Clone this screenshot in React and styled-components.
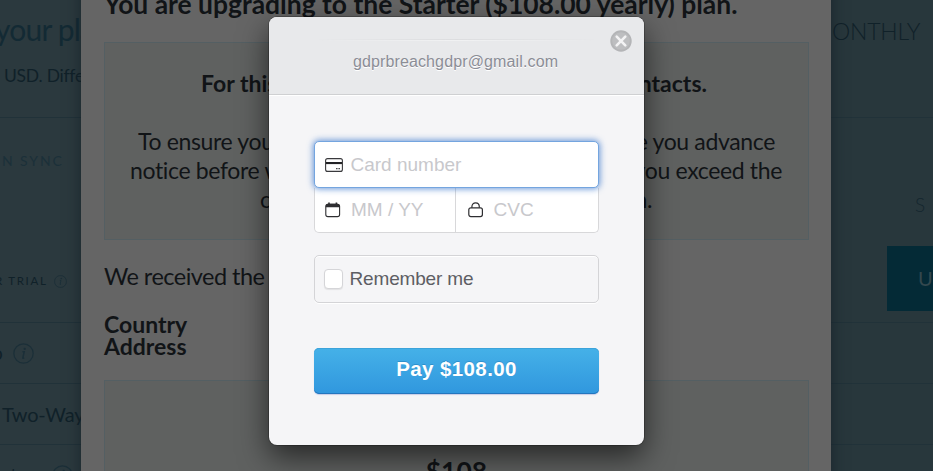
import React from "react";
import styled, { createGlobalStyle } from "styled-components";

const GlobalStyle = createGlobalStyle`
  * { box-sizing: border-box; }
  body { margin: 0; overflow: hidden; background: #2b393e; font-family: Lato, sans-serif; }
`;

const Screen = styled.main`
  position: relative;
  width: 933px;
  height: 471px;
  overflow: hidden;
`;

/* Pricing page, dimmed behind both dialogs */
const Pricing = styled.div`
  display: flex;
  justify-content: space-between;
  height: 100%;
  background: #2b393e;
`;

const Side = styled.section`
  width: ${(p) => p.$width}px;
  overflow: hidden;
  background: ${(p) => p.$bg};
  color: #15272f;
  white-space: nowrap;
`;

const Band = styled.div`
  height: ${(p) => p.$height}px;
  padding-top: ${(p) => p.$top || 0}px;
  border-bottom: 1px solid #213239;
`;

const Copy = styled.div`
  display: flex;
  align-items: center;
  gap: ${(p) => p.$gap || 0}px;
  height: ${(p) => p.$line}px;
  line-height: ${(p) => p.$line}px;
  margin: ${(p) => p.$margin || "0"};
  font-size: ${(p) => p.$size}px;
  font-weight: ${(p) => p.$weight || 400};
  letter-spacing: ${(p) => p.$track || 0}px;
  color: ${(p) => p.$color || "#102129"};
`;

const Upgrade = styled.div`
  width: 120px;
  height: 65px;
  margin: 27px 0 0 56px;
  padding-left: 31px;
  background: #042a36;
  color: #34484e;
  font-size: 20px;
  line-height: 65px;
`;

/* Plan confirmation sheet */
const Sheet = styled.section`
  position: absolute;
  top: 0;
  bottom: 0;
  left: 81px;
  width: 750px;
  padding: 0 22px 0 23px;
  overflow: hidden;
  background: #656565;
  color: #111417;
  white-space: nowrap;
`;

const SheetShade = styled.div`
  position: absolute;
  top: -20px;
  bottom: -20px;
  left: 81px;
  width: 750px;
  box-shadow: 0 0 14px rgba(18, 28, 36, 0.7);
`;

const SheetTitle = styled.h1`
  display: flex;
  height: 42px;
  margin: 0;
  font-size: 26.45px;
  font-weight: 700;
  line-height: 30px;
  & > span { display: block; margin-top: -11px; }
`;

const Panel = styled.div`
  height: ${(p) => p.$height}px;
  padding-top: ${(p) => p.$top}px;
  border: 1px solid #545f63;
  background: #5f6160;
`;

const SplitLine = styled.p`
  display: flex;
  justify-content: space-between;
  width: ${(p) => p.$width}px;
  margin: 0 0 ${(p) => p.$after || 0}px ${(p) => p.$left}px;
  font-size: 23px;
  font-weight: ${(p) => p.$weight || 400};
  letter-spacing: ${(p) => (p.$weight ? 0 : -0.35)}px;
  line-height: 29px;
`;

const Received = styled.p`
  margin: 21px 0 22px;
  font-size: 23.5px;
  letter-spacing: -0.52px;
  line-height: 30px;
`;

const Labels = styled.div`
  height: 67px;
  font-size: 23px;
  font-weight: 700;
  line-height: 22px;
`;

const Price = styled.div`
  font-size: 26.5px;
  font-weight: 700;
  line-height: 30px;
  text-align: center;
`;

/* Checkout dialog */
const Checkout = styled.section`
  position: absolute;
  top: 17px;
  left: 269px;
  width: 375px;
  height: 428px;
  border-radius: 8px;
  background: #f5f5f7;
  box-shadow: 0 12px 30px rgba(0, 0, 0, 0.6), 0 0 0 1px rgba(0, 0, 0, 0.22);
  font-family: "Liberation Sans", Arial, sans-serif;
`;

const CheckoutHeader = styled.header`
  height: 78px;
  padding-top: 22px;
  border-bottom: 1px solid #cfd0d2;
  border-radius: 8px 8px 0 0;
  background: #e8e9eb;
  text-align: center;
`;

const Hairline = styled.div`
  height: 2px;
  margin: 0 48px;
  background: linear-gradient(#dcdddf 50%, #f0f1f2 50%);
  mask-image: linear-gradient(90deg, transparent, #000 50%, transparent);
`;

const Email = styled.div`
  padding: 11px 2px 0 0;
  color: #8b8d96;
  font-size: 16px;
  letter-spacing: 0.13px;
  line-height: 20px;
  text-shadow: 0 1px 0 #fff;
`;

const Close = styled.button`
  position: absolute;
  top: 12.5px;
  right: 12.5px;
  width: 22px;
  height: 22px;
  padding: 0;
  border: 0;
  background: none;
  svg { display: block; }
`;

const Form = styled.form`
  padding: 45px 45px 0;
  border-top: 1px solid #fff;
`;

const Fields = styled.div`
  display: grid;
  grid-template-columns: 142px 143px;
`;

const Field = styled.label`
  display: flex;
  align-items: center;
  height: ${(p) => (p.$focus ? 47 : 45)}px;
  grid-column: ${(p) => (p.$focus ? "1 / 3" : "auto")};
  padding-left: ${(p) => p.$inset}px;
  gap: ${(p) => p.$gap}px;
  border: 1px solid ${(p) => (p.$focus ? "#74a5df" : "#d8d8da")};
  border-width: ${(p) => (p.$focus ? "1px" : p.$last ? "0 1px 1px 0" : "0 1px 1px 1px")};
  border-radius: ${(p) => (p.$focus ? "5px" : p.$last ? "0 0 5px 0" : "0 0 0 5px")};
  background: #fff;
  color: #c8c8cc;
  font-size: 19px;
  line-height: 24px;
  position: relative;
  z-index: ${(p) => (p.$focus ? 1 : 0)};
  box-shadow: ${(p) => (p.$focus ? "0 0 6px 1px rgba(60, 120, 205, .75)" : "none")};
  svg { flex: none; }
`;

const Remember = styled.label`
  display: flex;
  align-items: center;
  height: 48px;
  margin-top: 22px;
  padding-left: 9px;
  gap: 6.5px;
  border: 1px solid #d4d4d7;
  border-radius: 5px;
  box-shadow: 0 1px 0 #fff, inset 0 1px 0 #fff;
  color: #5d5e64;
  font-size: 19px;
  letter-spacing: -0.16px;
  line-height: 24px;
`;

const Check = styled.span`
  width: 19px;
  height: 20px;
  border: 1px solid #d5d5d8;
  border-radius: 4px;
  background: #fff;
  box-shadow: 0 1px 1px rgba(0, 0, 0, 0.08);
`;

const Pay = styled.button`
  display: block;
  width: 285px;
  height: 46px;
  margin-top: 45px;
  padding: 0 0 4px;
  border: 0;
  border-radius: 5px;
  background: linear-gradient(#45b1e8, #3097de);
  box-shadow: inset 0 -1px 0 #2376be, inset 0 1px 0 #3ca3da, 0 1px 1px rgba(60, 80, 180, .25);
  color: #fff;
  font: 700 20.5px "Liberation Sans", Arial, sans-serif;
  letter-spacing: 0.4px;
  text-shadow: 0 -1px 0 rgba(0, 70, 130, 0.25);
`;

function Info({ size }) {
  return (
    <svg width={size} height={size} viewBox="0 0 20 20" fill="none" stroke="#1b2f38">
      <circle cx="10" cy="10" r="9.2" strokeWidth="1.2" />
      <path d="M9 8.3h1.7L9.4 14q-.2 1 1.3.2" strokeWidth="1.4" />
      <circle cx="11.1" cy="5.6" r=".6" fill="#1b2f38" />
    </svg>
  );
}

function CloseIcon() {
  return (
    <svg width="22" height="22" viewBox="0 0 22 22">
      <circle cx="11" cy="11" r="10.7" fill="#b4b5b7" />
      <circle cx="11" cy="11" r="8.8" fill="#bdbec0" />
      <path d="m6.7 6.7 8.6 8.6m0-8.6-8.6 8.6" stroke="#f3f3f4" strokeWidth="2.6" strokeLinecap="round" />
    </svg>
  );
}

function CardIcon() {
  return (
    <svg width="18" height="14" viewBox="0 0 18 14">
      <rect x=".6" y=".6" width="16.8" height="12.8" rx="2" fill="none" stroke="#3a3a3d" strokeWidth="1.1" />
      <path d="M1 4h16v2.1H1z" fill="#222225" />
      <path d="M11 10.7h1.6m.8 0H15" stroke="#4a4a4d" strokeWidth="1.2" />
    </svg>
  );
}

function CalendarIcon() {
  return (
    <svg width="16" height="16" viewBox="0 0 16 16">
      <rect x=".8" y="2.2" width="13.8" height="12.4" rx="2.2" fill="none" stroke="#2e2e31" strokeWidth="1.1" />
      <path d="M.8 5.3V4Q.8 1.7 3 1.7h9.4q2.2 0 2.2 2.3v1.3z" fill="#2e2e31" />
      <path d="M4 2.5V.5m7.4 2V.5" stroke="#2e2e31" strokeWidth="1.6" />
    </svg>
  );
}

function LockIcon() {
  return (
    <svg width="16" height="16" viewBox="0 0 16 16" fill="none" stroke="#2e2e31" strokeWidth="1.2">
      <rect x=".8" y="5.8" width="13.6" height="8.8" rx="2" />
      <path d="M3.9 5.8v-1C3.9 2.4 5.5.8 7.6.8s3.7 1.6 3.7 4v1" />
    </svg>
  );
}

export default function App() {
  return (
    <Screen>
      <GlobalStyle />
      <Pricing>
        <Side $width={90} $bg="#2b393e">
          <Band $height={118} $top={10}>
            <Copy $size={30} $line={38} $track={-0.8} $margin="0 0 0 -5px" $color="#132a34">your plan</Copy>
            <Copy $size={17.5} $line={24} $track={-0.25} $margin="16px 0 0 4px">USD. Different</Copy>
          </Band>
          <Band $height={205} $top={33}>
            <Copy $size={14} $line={20} $track={1.9} $color="#1b3039" $margin="0 0 0 2px">N SYNC</Copy>
            <Copy $size={11.5} $line={16} $track={1.7} $gap={6} $margin="102px 0 0 -5px">
              R TRIAL <Info size={13} />
            </Copy>
          </Band>
          <Band $height={61} $top={19}>
            <Copy $size={19} $line={22} $gap={10} $margin="0 0 0 -8px">o <Info size={21} /></Copy>
          </Band>
          <Band $height={61} $top={18}>
            <Copy $size={20} $line={24} $track={-0.2} $margin="0 0 0 2px">Two-Way</Copy>
          </Band>
          <Band $height={61} $top={18}>
            <Copy $size={19} $line={24} $gap={9} $margin="0 0 0 1px">ators <Info size={21} /></Copy>
          </Band>
        </Side>
        <Side $width={102} $bg="#28373c">
          <Band $height={118} $top={17}>
            <Copy $size={23} $line={28} $weight={300} $track={-0.2} $margin="0 0 0 1px">ONTHLY</Copy>
          </Band>
          <Band $height={205} $top={73}>
            <Copy $size={19} $line={28} $weight={300} $margin="0 0 0 84px" $color="#14262e">S</Copy>
            <Upgrade>UPGRADE</Upgrade>
          </Band>
          <Band $height={61} />
          <Band $height={61} />
          <Band $height={61} />
        </Side>
      </Pricing>
      <SheetShade />
      <Sheet>
        <SheetTitle><span>You are upgrading to the Starter ($108.00 yearly) plan.</span></SheetTitle>
        <Panel $height={198} $top={26}>
          <SplitLine $left={96} $width={506} $weight={700} $after={29}><span>For this</span><span>contacts.</span></SplitLine>
          <SplitLine $left={33} $width={637}><span>To ensure you</span><span>give you advance</span></SplitLine>
          <SplitLine $left={25} $width={652}><span>notice before we</span><span>if you exceed the</span></SplitLine>
          <SplitLine $left={155} $width={392}><span>contacts</span><span>plan.</span></SplitLine>
        </Panel>
        <Received>We received the following</Received>
        <Labels>Country<br />Address</Labels>
        <Panel $height={198} $top={75}><Price>$108</Price></Panel>
      </Sheet>
      <Checkout>
        <CheckoutHeader>
          <Hairline />
          <Email>gdprbreachgdpr@gmail.com</Email>
        </CheckoutHeader>
        <Close type="button" aria-label="Close"><CloseIcon /></Close>
        <Form>
          <Fields>
            <Field $focus $inset={9.5} $gap={8}><CardIcon />Card number</Field>
            <Field $inset={9.5} $gap={10.5}><CalendarIcon /><span>MM / YY</span></Field>
            <Field $last $inset={12} $gap={9.5}><LockIcon /><span>CVC</span></Field>
          </Fields>
          <Remember><Check />Remember me</Remember>
          <Pay type="button">Pay $108.00</Pay>
        </Form>
      </Checkout>
    </Screen>
  );
}
